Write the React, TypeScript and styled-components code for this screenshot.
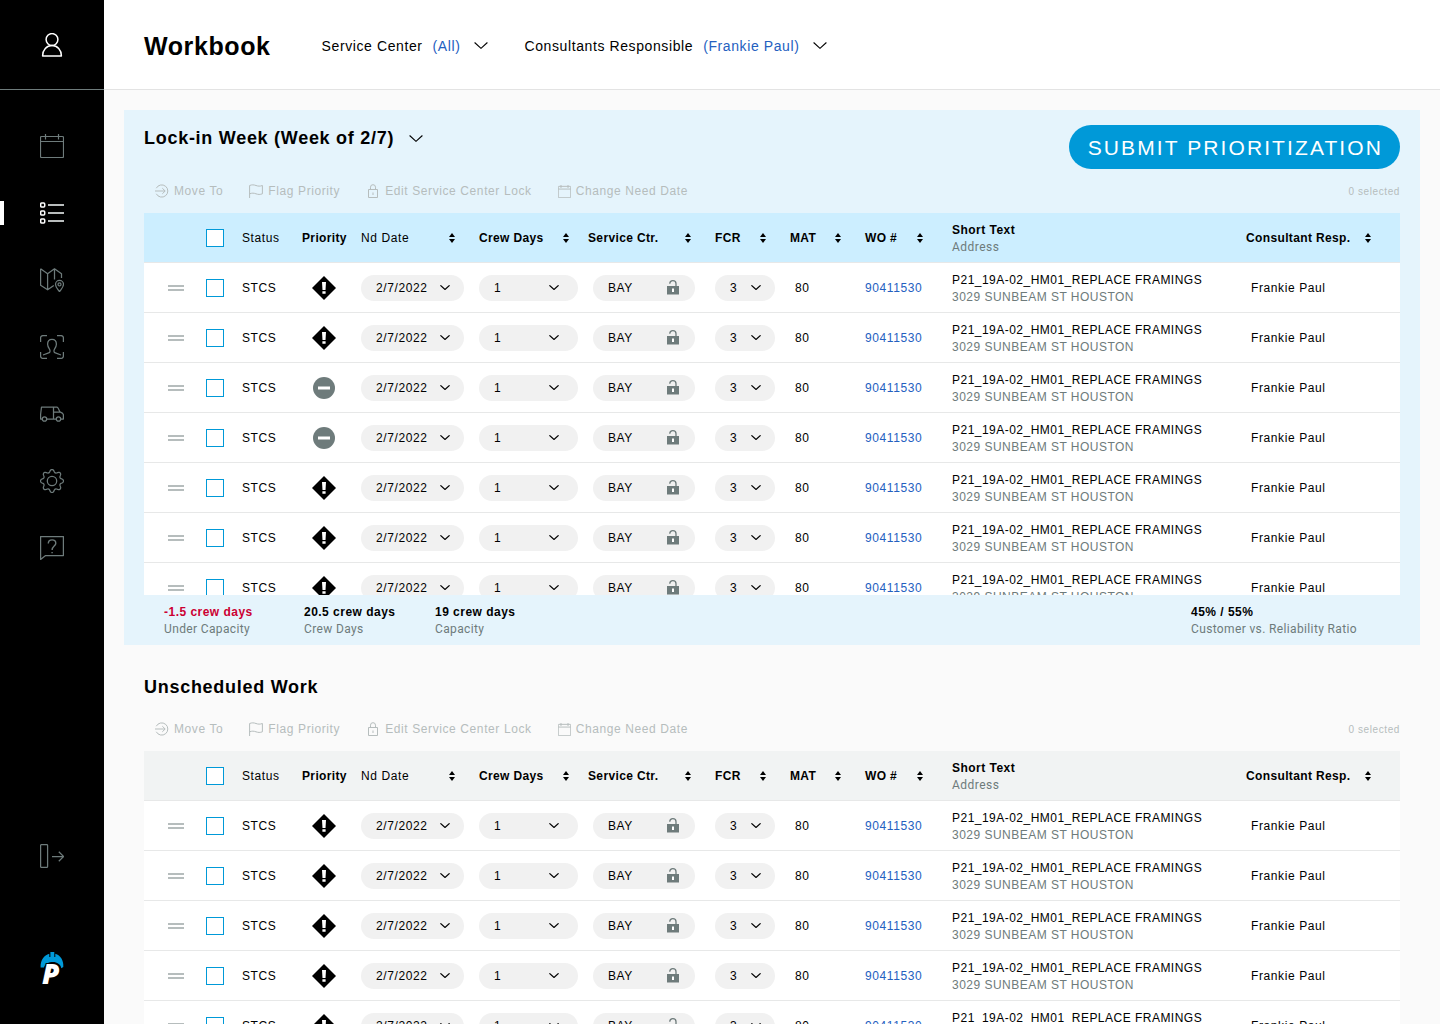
import React from "react";
import styled, { createGlobalStyle } from "styled-components";

const color = {
  ink: "#000000",
  slate: "#6e7b7b",
  faint: "#b6bdbd",
  link: "#2460bf",
  brand: "#0099d8",
  alert: "#cc0033",
  line: "#e7e8e8",
  pill: "#f1f1f1",
  page: "#fafafa",
};

const sans = `"Liberation Sans", Arial, Helvetica, sans-serif`;
const roboto = `Roboto, "Liberation Sans", sans-serif`;

const GlobalStyle = createGlobalStyle`
  *, *::before, *::after { box-sizing: border-box; }
  body {
    margin: 0;
    background: ${color.page};
    color: ${color.ink};
    font-family: ${sans};
    font-size: 12px;
    line-height: 17px;
    letter-spacing: 0.05em;
  }
  button, select, input { font: inherit; letter-spacing: inherit; color: inherit; }
  button { border: 0; padding: 0; background: none; cursor: pointer; }
  svg { display: block; flex: none; }
`;

const Shell = styled.div`
  display: flex;
  height: 100vh;
  overflow: hidden;
`;

/* ---------- sidebar ---------- */

const Sidebar = styled.aside`
  display: flex;
  flex-direction: column;
  flex: none;
  width: 104px;
  background: #000;
  color: ${color.slate};
`;

const Account = styled.div`
  display: flex;
  flex: none;
  height: 90px;
  border-bottom: 1px solid ${color.slate};
  color: #fff;
`;

const Nav = styled.nav`
  display: flex;
  flex-direction: column;
  gap: 43px;
  padding-top: 44px;
`;

const NavButton = styled.button<{ $active?: boolean }>`
  display: flex;
  align-items: center;
  justify-content: center;
  width: 100%;
  min-height: 24px;
  color: ${(p) => (p.$active ? "#fff" : "inherit")};
  box-shadow: ${(p) => (p.$active ? "inset 4px 0 #fff" : "none")};
`;

const SidebarFoot = styled.div`
  display: flex;
  flex-direction: column;
  align-items: center;
  gap: 84px;
  margin-top: auto;
  padding-bottom: 39px;
`;

const LogoSvg = styled.svg`
  overflow: visible;
`;

/* ---------- page ---------- */

const Page = styled.div`
  display: flex;
  flex-direction: column;
  flex: 1;
  min-width: 0;
`;

const TopBar = styled.header`
  display: flex;
  align-items: center;
  flex: none;
  gap: 51px;
  height: 90px;
  padding: 2px 40px 0;
  border-bottom: 1px solid #e3e3e3;
  background: #fff;
`;

const Title = styled.h1`
  margin: 0;
  font-size: 25px;
  line-height: 32px;
`;

const Filters = styled.div`
  display: flex;
  gap: 36px;
`;

const FilterButton = styled.button`
  display: flex;
  align-items: center;
  gap: 14px;
  font-size: 14px;
  line-height: 20px;
`;

const FilterText = styled.span`
  display: flex;
  gap: 10px;
`;

const FilterValue = styled.span`
  color: ${color.link};
`;

const Content = styled.main`
  flex: 1;
  min-height: 0;
  padding: 20px 20px 0;
  overflow: hidden;
`;

const LockedPanel = styled.section`
  padding: 15px 20px 0;
  background: #e5f4fc;
`;

const OpenPanel = styled.section`
  padding: 29px 20px 0;
`;

const PanelHead = styled.div<{ $tall?: boolean }>`
  display: flex;
  align-items: flex-start;
  justify-content: space-between;
  min-height: ${(p) => (p.$tall ? "44px" : "33px")};
`;

const PanelTitle = styled.h2`
  margin: 0;
  font-size: 18px;
  line-height: 26px;
  letter-spacing: 0.04em;
`;

const TitleButton = styled.button`
  display: flex;
  align-items: center;
  gap: 15px;
`;

const SubmitButton = styled.button`
  height: 44px;
  padding: 0 17px 0 19px;
  border-radius: 22px;
  background: ${color.brand};
  color: #fff;
  font-size: 21px;
  letter-spacing: 0.1em;
`;

const Toolbar = styled.div`
  display: flex;
  align-items: center;
  gap: 26px;
  height: 44px;
  padding-left: 11px;
  color: ${color.faint};
`;

const ToolButton = styled.button`
  display: flex;
  align-items: center;
  gap: 5px;
`;

const Selected = styled.span`
  margin-left: auto;
  font-size: 10px;
`;

/* ---------- table ---------- */

const TableClip = styled.div`
  max-height: 382px;
  overflow: hidden;
`;

const Table = styled.table`
  width: 100%;
  table-layout: fixed;
  border-collapse: separate;
  border-spacing: 0;
  background: #fff;
`;

const HeadRow = styled.tr<{ $blue?: boolean }>`
  background: ${(p) => (p.$blue ? "#cceeff" : "#f1f3f3")};
`;

const Th = styled.th<{ $light?: boolean; $text?: boolean }>`
  height: 50px;
  padding: ${(p) => (p.$text ? 2 : 0)}px 0 0;
  border-bottom: 1px solid ${color.line};
  font-weight: ${(p) => (p.$light ? 400 : 700)};
  letter-spacing: ${(p) => (p.$light ? "0.05em" : "0.03em")};
  text-align: left;
  white-space: nowrap;
`;

const Td = styled.td<{ $indent?: number; $text?: boolean }>`
  height: 50px;
  padding: ${(p) => (p.$text ? 2 : 0)}px 0 0 ${(p) => p.$indent ?? 0}px;
  border-bottom: 1px solid ${color.line};
  white-space: nowrap;
`;

const SortButton = styled.button<{ $inset: number }>`
  display: flex;
  align-items: center;
  justify-content: space-between;
  width: 100%;
  padding-right: ${(p) => p.$inset}px;
`;

const SortLabel = styled.span`
  padding-top: 2px;
`;

const Check = styled.input`
  display: block;
  appearance: none;
  width: 18px;
  height: 18px;
  margin: 0;
  border: 1px solid ${color.brand};
  background: #fff;
  &:checked { background: ${color.brand}; }
`;

const Handle = styled.button`
  display: block;
  width: 16px;
  height: 6px;
  border-top: 2px solid ${color.faint};
  border-bottom: 2px solid ${color.faint};
  cursor: grab;
`;

const Pill = styled.div<{ $width: number; $inset: number }>`
  display: grid;
  align-items: center;
  width: ${(p) => p.$width}px;
  height: 26px;
  border-radius: 13px;
  background: ${color.pill};
  & > * { grid-area: 1 / 1; }
  & > svg { justify-self: end; margin-right: ${(p) => p.$inset}px; pointer-events: none; }
`;

const PillSelect = styled.select`
  appearance: none;
  width: 100%;
  height: 26px;
  padding: 2px 0 0 15px;
  border: 0;
  border-radius: 13px;
  background: transparent;
`;

const OrderLink = styled.a`
  color: ${color.link};
  text-decoration: none;
`;

const MainLine = styled.div`
  letter-spacing: 0.04em;
`;

const SubLine = styled.div<{ $roboto?: boolean }>`
  color: ${color.slate};
  font-family: ${(p) => (p.$roboto ? roboto : "inherit")};
  font-weight: 400;
  letter-spacing: 0.04em;
`;

const Summary = styled.dl`
  display: grid;
  grid-template-columns: 140px 131px 1fr 209px;
  margin: 0;
  padding: 9px 0 7px 20px;
`;

const Stat = styled.div`
  display: flex;
  flex-direction: column-reverse;
`;

const StatValue = styled.dd<{ $alert?: boolean }>`
  margin: 0;
  color: ${(p) => (p.$alert ? color.alert : color.ink)};
  font-weight: 700;
  letter-spacing: 0.04em;
`;

const StatLabel = styled.dt`
  color: ${color.slate};
  font-family: ${roboto};
  letter-spacing: 0.03em;
`;

/* ---------- icons ---------- */

const Glyph = ({ size = 24, box = 24, children }: { size?: number; box?: number; children: React.ReactNode }) => (
  <svg width={size} height={size} viewBox={`0 0 ${box} ${box}`} fill="none" stroke="currentColor" strokeWidth="1.25" strokeLinejoin="round" aria-hidden="true">
    {children}
  </svg>
);

const UserIcon = () => (
  <Glyph>
    <circle cx="12" cy="6.5" r="5.9" strokeWidth="1.5" />
    <path d="M2.6 23h18.8c0-6-4-10.4-9.4-10.4S2.6 17 2.6 23z" strokeWidth="1.5" />
  </Glyph>
);

const CalendarIcon = ({ size }: { size?: number }) => (
  <Glyph size={size}>
    <path d="M1.5 2.5h21a1 1 0 0 1 1 1v19a1 1 0 0 1-1 1h-21a1 1 0 0 1-1-1v-19a1 1 0 0 1 1-1zM.5 7.5h23M5.5 0v5.5M18.5 0v5.5" strokeWidth={size ? 1.8 : 1.2} />
  </Glyph>
);

const ListIcon = () => (
  <Glyph>
    {[4, 12, 20].map((y) => (
      <React.Fragment key={y}>
        <rect x=".7" y={y - 2} width="4" height="4" rx="1" strokeWidth="1.5" />
        <path d={`M8 ${y}h16`} stroke="#cfd3d3" strokeWidth="1.8" />
      </React.Fragment>
    ))}
  </Glyph>
);

const MapIcon = () => (
  <Glyph>
    <path d="M.6.8v16.4l7 4.6 6.2-4.4M.6.8l7 5 6.9-5 7 5V10M7.6 5.800v16M14.5.8v10.6" />
    <path d="M19.5 23.7c-1.8-2.7-4-4.9-4-7.3a4 4 0 0 1 8 0c0 2.4-2.2 4.6-4 7.3z" />
    <circle cx="19.5" cy="16.4" r="1.5" />
  </Glyph>
);

const FaceIcon = () => (
  <Glyph>
    <path d="M.6 7V3A2.4 2.4 0 0 1 3 .6h4M17 .6h4A2.4 2.4 0 0 1 23.4 3v4M23.4 17v4a2.4 2.4 0 0 1-2.4 2.4h-4M7 23.4H3A2.4 2.4 0 0 1 .6 21v-4" />
    <path d="M3 20l6.3-2.3c.9-.4.9-2.6.3-3.4C8.3 12.6 7.6 11 7.6 9.3c0-3 1.600-4.900 4.400-4.900s4.400 1.900 4.400 4.900c0 1.700-.7 3.300-2 5-.6.8-.6 3 .3 3.400L21 20" />
  </Glyph>
);

const VanIcon = () => (
  <Glyph>
    <path d="M2.3 17H.6v-4.500L1.500 5h15.300c1 0 1.700 1.200 3 4.800 2.400.9 3.600 1.300 3.600 3V17h-2.600M6.700 17h9.600M13.500 5v12M13.500 10h6.500" />
    <circle cx="4.5" cy="17" r="2.2" />
    <circle cx="18.5" cy="17" r="2.2" />
  </Glyph>
);

const gearOutline = Array.from({ length: 97 }, (_, i) => {
  const angle = (i / 96) * Math.PI * 2;
  const wave = Math.cos(angle * 8);
  const radius = 10.1 + 1.4 * Math.sign(wave) * Math.pow(Math.abs(wave), 0.7);
  return `${(12 + radius * Math.cos(angle)).toFixed(2)} ${(12 + radius * Math.sin(angle)).toFixed(2)}`;
}).join("L");

const GearIcon = () => (
  <Glyph>
    <path d={`M${gearOutline}z`} />
    <circle cx="12" cy="12" r="4.7" />
  </Glyph>
);

const HelpIcon = () => (
  <Glyph>
    <path d="M.6.6h22.800v19H5.600L.6 23.400z" />
    <path d="M8.300 7.600c0-2.200 1.500-3.700 3.800-3.700s3.700 1.500 3.700 3.400c0 2.800-3.700 2.900-3.700 6.700M12.100 16v1.300" strokeWidth="1.4" />
  </Glyph>
);

const ExitIcon = () => (
  <Glyph>
    <rect x=".6" y=".6" width="7" height="22.8" rx=".8" />
    <path d="M12 12.500h12M18.800 7.800l4.900 4.700-4.900 4.700" />
  </Glyph>
);

const Logo = () => (
  <LogoSvg width="24" height="33" viewBox="0 0 24 33" role="img" aria-label="P logo">
    <path d="M.6 15.500C.3 8 4 3.300 9.300 1.700V5h1.100V0h3.900v5h1V1.800c5.300 1.600 8.600 6.800 8 13.200l-2 1.200C20.600 12.300 17 10 13 10c-4.600 0-7.500 1.500-9 5.500z" fill={color.brand} />
    <text x="2" y="32" fill="#fff" stroke="#000" strokeWidth="2" paintOrder="stroke" fontFamily="Open Sans, Noto Sans, sans-serif" fontWeight="800" fontStyle="italic" fontSize="28" letterSpacing="0">P</text>
  </LogoSvg>
);

const Chevron = ({ width = 14 }: { width?: number }) => (
  <svg width={width} height={width / 2} viewBox="0 0 14 7" fill="none" stroke="currentColor" strokeWidth={width < 14 ? 1.7 : 1.1} aria-hidden="true">
    <path d="M.6.5L7 6.300 13.400.5" />
  </svg>
);

const SortIcon = () => (
  <svg width="6" height="10" viewBox="0 0 6 10" fill="currentColor" aria-hidden="true">
    <path d="M3 0l3 4H0zM3 10l3-4H0z" />
  </svg>
);

const MoveIcon = () => (
  <Glyph size={14} box={14}>
    <path d="M1.300 4.200a6.100 6.100 0 1 1 0 5.600M0 7h10M7.300 4.200L10.200 7 7.300 9.800" strokeWidth="1" />
  </Glyph>
);

const FlagIcon = () => (
  <Glyph size={14} box={14}>
    <path d="M.6 14V1.500c2.400-.9 4.200-.8 6.400 0s4 .9 6.400 0v8.300c-2.400.9-4.200.8-6.400 0s-4-.9-6.400 0" strokeWidth="1" />
  </Glyph>
);

const PadlockIcon = () => (
  <Glyph size={14} box={14}>
    <path d="M2.500 5.500h9v8h-9zM4.500 5.500V3.200a2.500 2.500 0 0 1 5 0v2.300M7 8.500v2.500" strokeWidth="1" />
  </Glyph>
);

const UnlockedIcon = () => (
  <svg width="12" height="15" viewBox="0 0 12 15" aria-hidden="true">
    <path d="M2.800 3.800a3.100 3.100 0 0 1 6.200 0V6" fill="none" stroke={color.slate} strokeWidth="1.3" />
    <path d="M0 6h12v8.500H0z" fill={color.slate} />
    <path d="M5 8.500h2v3.500H5z" fill="#fff" />
  </svg>
);

const UrgentIcon = () => (
  <svg width="24" height="24" viewBox="0 0 24 24" role="img" aria-label="High priority">
    <path d="M12 0l12 12-12 12L0 12z" fill="#000" />
    <path d="M10 6h4l-.5 8h-3zM10.400 15.200h3.200v2.600h-3.200z" fill="#fff" />
  </svg>
);

const NormalIcon = () => (
  <svg width="24" height="24" viewBox="0 0 24 24" role="img" aria-label="Normal priority">
    <circle cx="12" cy="12" r="11" fill={color.slate} />
    <path d="M6 10.500h12v3H6z" fill="#fff" />
  </svg>
);

/* ---------- pieces ---------- */

const navItems = [
  { label: "Calendar", Icon: CalendarIcon },
  { label: "Workbook", Icon: ListIcon, active: true },
  { label: "Map", Icon: MapIcon },
  { label: "Consultants", Icon: FaceIcon },
  { label: "Vehicles", Icon: VanIcon },
  { label: "Settings", Icon: GearIcon },
  { label: "Help", Icon: HelpIcon },
];

const Filter = ({ label, value }: { label: string; value: string }) => (
  <FilterButton type="button" aria-haspopup="listbox">
    <FilterText>
      {label} <FilterValue>({value})</FilterValue>
    </FilterText>
    <Chevron />
  </FilterButton>
);

const Tools = () => (
  <Toolbar>
    <ToolButton type="button"><MoveIcon />Move To</ToolButton>
    <ToolButton type="button"><FlagIcon />Flag Priority</ToolButton>
    <ToolButton type="button"><PadlockIcon />Edit Service Center Lock</ToolButton>
    <ToolButton type="button"><CalendarIcon size={13} />Change Need Date</ToolButton>
    <Selected>0 selected</Selected>
  </Toolbar>
);

const columnWidths = [62, 36, 60, 59, 118, 109, 127, 75, 75, 87, undefined, 154];

const SortTh = ({ label, inset = 24, light }: { label: string; inset?: number; light?: boolean }) => (
  <Th $light={light} scope="col">
    <SortButton type="button" $inset={inset}>
      <SortLabel>{label}</SortLabel>
      <SortIcon />
    </SortButton>
  </Th>
);

const WorkTable = ({ name, blue, rows }: { name: string; blue?: boolean; rows: boolean[] }) => (
  <Table aria-label={name}>
    <colgroup>
      {columnWidths.map((width, i) => (
        <col key={i} width={width} />
      ))}
    </colgroup>
    <thead>
      <HeadRow $blue={blue}>
        <Th />
        <Th><Check type="checkbox" aria-label={`Select all in ${name}`} /></Th>
        <Th $light $text scope="col">Status</Th>
        <Th $text scope="col">Priority</Th>
        <SortTh label="Nd Date" light />
        <SortTh label="Crew Days" inset={19} />
        <SortTh label="Service Ctr." />
        <SortTh label="FCR" />
        <SortTh label="MAT" />
        <SortTh label="WO #" inset={29} />
        <Th $text scope="col">
          <MainLine>Short Text</MainLine>
          <SubLine $roboto>Address</SubLine>
        </Th>
        <SortTh label="Consultant Resp." inset={29} />
      </HeadRow>
    </thead>
    <tbody>
      {rows.map((urgent, i) => (
        <tr key={i}>
          <Td $indent={24}><Handle type="button" aria-label={`Reorder row ${i + 1}`} /></Td>
          <Td><Check type="checkbox" aria-label={`Select row ${i + 1}`} /></Td>
          <Td $text>STCS</Td>
          <Td $indent={10}>{urgent ? <UrgentIcon /> : <NormalIcon />}</Td>
          <Td>
            <Pill $width={103} $inset={14}>
              <PillSelect aria-label="Need date"><option>2/7/2022</option></PillSelect>
              <Chevron width={10} />
            </Pill>
          </Td>
          <Td>
            <Pill $width={99} $inset={19}>
              <PillSelect aria-label="Crew days"><option>1</option></PillSelect>
              <Chevron width={10} />
            </Pill>
          </Td>
          <Td $indent={5}>
            <Pill $width={102} $inset={16}>
              <PillSelect aria-label="Service center"><option>BAY</option></PillSelect>
              <UnlockedIcon />
            </Pill>
          </Td>
          <Td>
            <Pill $width={60} $inset={14}>
              <PillSelect aria-label="FCR"><option>3</option></PillSelect>
              <Chevron width={10} />
            </Pill>
          </Td>
          <Td $indent={5} $text>80</Td>
          <Td $text><OrderLink href="#90411530">90411530</OrderLink></Td>
          <Td $text>
            <MainLine>P21_19A-02_HM01_REPLACE FRAMINGS</MainLine>
            <SubLine>3029 SUNBEAM ST HOUSTON</SubLine>
          </Td>
          <Td $indent={5} $text>Frankie Paul</Td>
        </tr>
      ))}
    </tbody>
  </Table>
);

const stats = [
  { value: "-1.5 crew days", label: "Under Capacity", alert: true },
  { value: "20.5 crew days", label: "Crew Days" },
  { value: "19 crew days", label: "Capacity" },
  { value: "45% / 55%", label: "Customer vs. Reliability Ratio" },
];

export default function App() {
  return (
    <>
      <GlobalStyle />
      <Shell>
        <Sidebar>
          <Account>
            <NavButton type="button" aria-label="Account"><UserIcon /></NavButton>
          </Account>
          <Nav aria-label="Main">
            {navItems.map(({ label, Icon, active }) => (
              <NavButton key={label} type="button" aria-label={label} $active={active}>
                <Icon />
              </NavButton>
            ))}
          </Nav>
          <SidebarFoot>
            <NavButton type="button" aria-label="Sign out"><ExitIcon /></NavButton>
            <Logo />
          </SidebarFoot>
        </Sidebar>
        <Page>
          <TopBar>
            <Title>Workbook</Title>
            <Filters>
              <Filter label="Service Center" value="All" />
              <Filter label="Consultants Responsible" value="Frankie Paul" />
            </Filters>
          </TopBar>
          <Content>
            <LockedPanel>
              <PanelHead $tall>
                <PanelTitle>
                  <TitleButton type="button" aria-haspopup="listbox">
                    Lock-in Week (Week of 2/7)
                    <Chevron />
                  </TitleButton>
                </PanelTitle>
                <SubmitButton type="button">SUBMIT PRIORITIZATION</SubmitButton>
              </PanelHead>
              <Tools />
              <TableClip>
                <WorkTable name="Lock-in Week" blue rows={[true, true, false, false, true, true, true]} />
              </TableClip>
              <Summary>
                {stats.map((s) => (
                  <Stat key={s.label}>
                    <StatLabel>{s.label}</StatLabel>
                    <StatValue $alert={s.alert}>{s.value}</StatValue>
                  </Stat>
                ))}
              </Summary>
            </LockedPanel>
            <OpenPanel>
              <PanelHead>
                <PanelTitle>Unscheduled Work</PanelTitle>
              </PanelHead>
              <Tools />
              <WorkTable name="Unscheduled Work" rows={[true, true, true, true, true, true]} />
            </OpenPanel>
          </Content>
        </Page>
      </Shell>
    </>
  );
}
